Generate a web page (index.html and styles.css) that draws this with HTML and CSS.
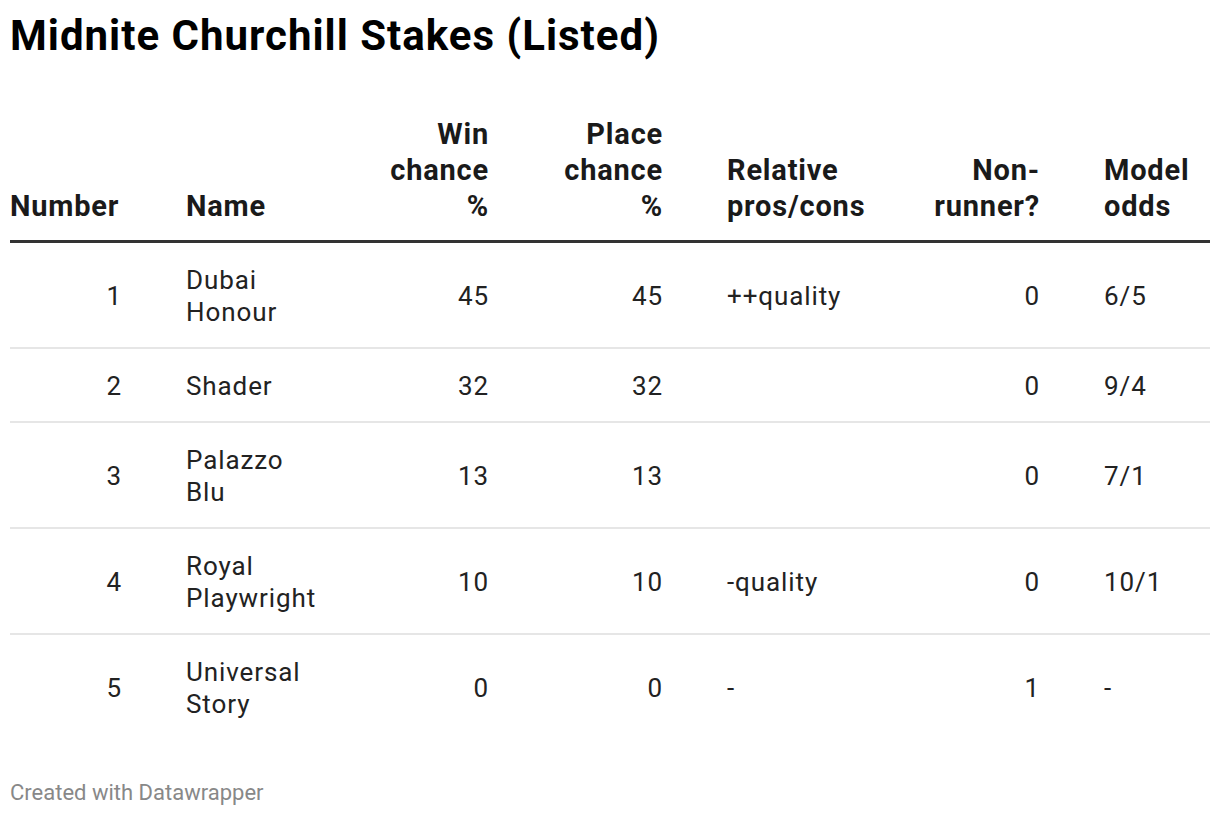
FILE: index.html
```html
<!DOCTYPE html>
<html>
<head>
<meta charset="utf-8">
<link rel="stylesheet" href="styles.css">
</head>
<body>
<div class="chart">
  <h1 class="title">Midnite Churchill Stakes (Listed)</h1>
  <table class="table">
    <colgroup>
      <col class="c-num"><col class="c-name"><col class="c-win"><col class="c-place"><col class="c-rel"><col class="c-nr"><col class="c-odds">
    </colgroup>
    <thead>
      <tr>
        <th class="left">Number</th>
        <th class="left">Name</th>
        <th class="right">Win<br>chance<br>%</th>
        <th class="right">Place<br>chance<br>%</th>
        <th class="left">Relative<br>pros/cons</th>
        <th class="right">Non-<br>runner?</th>
        <th class="left">Model<br>odds</th>
      </tr>
    </thead>
    <tbody>
      <tr>
        <td class="right">1</td><td class="left">Dubai<br>Honour</td><td class="right">45</td><td class="right">45</td><td class="left">++quality</td><td class="right">0</td><td class="left">6/5</td>
      </tr>
      <tr>
        <td class="right">2</td><td class="left">Shader</td><td class="right">32</td><td class="right">32</td><td class="left"></td><td class="right">0</td><td class="left">9/4</td>
      </tr>
      <tr>
        <td class="right">3</td><td class="left">Palazzo<br>Blu</td><td class="right">13</td><td class="right">13</td><td class="left"></td><td class="right">0</td><td class="left">7/1</td>
      </tr>
      <tr>
        <td class="right">4</td><td class="left">Royal<br>Playwright</td><td class="right">10</td><td class="right">10</td><td class="left">-quality</td><td class="right">0</td><td class="left">10/1</td>
      </tr>
      <tr class="last">
        <td class="right">5</td><td class="left">Universal<br>Story</td><td class="right">0</td><td class="right">0</td><td class="left">-</td><td class="right">1</td><td class="left">-</td>
      </tr>
    </tbody>
  </table>
  <div class="footer">Created with Datawrapper</div>
</div>
</body>
</html>
```

FILE: styles.css
```css
* { box-sizing: border-box; }
html, body { margin: 0; padding: 0; background: #fff; }
body { font-family: Roboto, "Liberation Sans", sans-serif; color: #1d1d1d; }
.chart { padding: 12px 10px 0 10px; width: 1220px; }
.title { margin: 0; font-size: 42px; line-height: 48px; letter-spacing: 1px; font-weight: 700; color: #000; }
.table { margin-top: 36px; width: 1200px; border-collapse: collapse; table-layout: fixed; }
.c-num { width: 143px; }
.c-name { width: 200px; }
.c-win { width: 167px; }
.c-place { width: 174px; }
.c-rel { width: 203px; }
.c-nr { width: 174px; }
.c-odds { width: 139px; }
.table th, .table td { padding-left: 33px; padding-right: 32px; }
.table th:first-child, .table td:first-child { padding-left: 0; }
.table th:last-child, .table td:last-child { padding-right: 0; }
.table th.right, .table td.right { padding-right: 31px; }
.table th { font-size: 29px; line-height: 36px; letter-spacing: 0.8px; font-weight: 700; vertical-align: bottom; padding-top: 20px; padding-bottom: 16px; border-bottom: 3px solid #333; color: #1a1a1a; }
.table td { font-size: 26px; line-height: 32px; letter-spacing: 0.9px; font-weight: 400; vertical-align: middle; padding-top: 21px; padding-bottom: 19px; border-bottom: 2px solid #e6e6e6; color: #222; }
.table tr.last td { border-bottom: none; }
.left { text-align: left; }
.right { text-align: right; }
.footer { margin-top: 41px; font-size: 22px; line-height: 26px; color: #888; }
```
